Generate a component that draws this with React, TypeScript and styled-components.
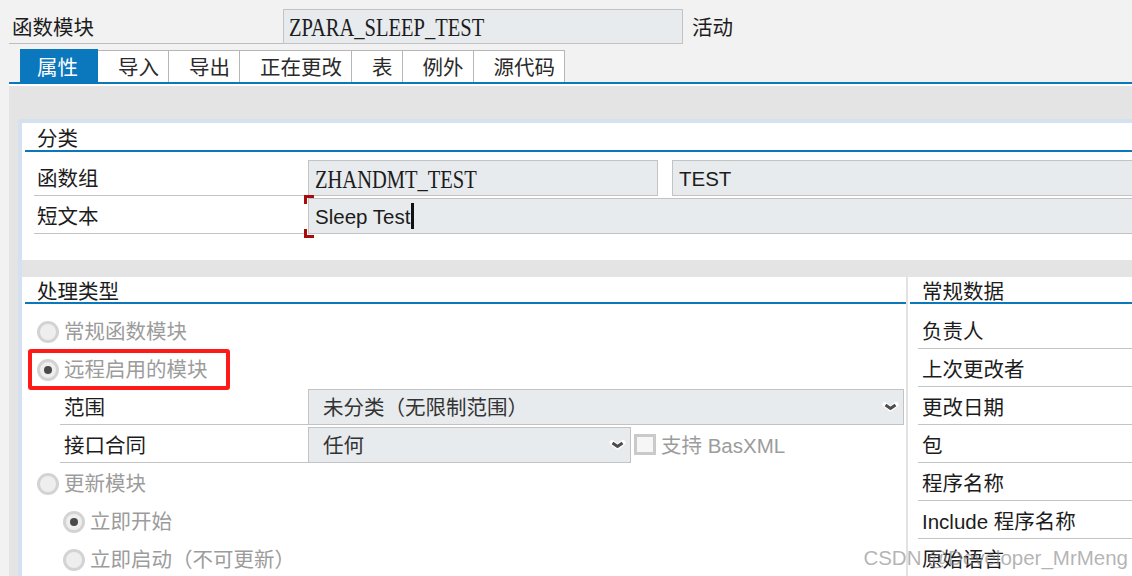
import React from 'react';
import styled, { createGlobalStyle } from 'styled-components';

const colors = {
  blue: '#0b78bd',
  page: '#f2f2f2',
  canvas: '#e4e4e4',
  frame: '#d5e1ee',
  field: '#e8ebee',
  fieldBorder: '#c3c3c3',
  rule: '#c4c4c4',
  tabBorder: '#b6b6b6',
  text: '#1c1c1c',
  muted: '#9c9c9c',
};

const GlobalStyle = createGlobalStyle`
  *, *::before, *::after { box-sizing: border-box; }
  html, body { margin: 0; padding: 0; background: ${colors.page}; }
  body {
    font-family: 'Liberation Sans', 'Noto Sans CJK SC', sans-serif;
    color: ${colors.text};
  }
`;

const Page = styled.div`
  position: relative;
  width: 1132px;
  height: 576px;
  overflow: hidden;
  background: ${colors.page};
  font-size: 20.5px;
  line-height: 1;
`;

const HeaderRow = styled.div`
  display: flex;
  align-items: stretch;
  height: 44px;
  padding: 9px 0 0 9px;
`;

const HeaderLabel = styled.div`
  width: 274px;
  padding: 4px 0 0 3px;
  display: flex;
  align-items: center;
  border-bottom: 1px solid #bdbdbd;
`;

const HeaderField = styled.div`
  width: 400px;
  padding: 2px 0 0 5px;
  display: flex;
  align-items: center;
  background: ${colors.field};
  border: 1px solid ${colors.fieldBorder};
`;

const Status = styled.div`
  padding: 3px 0 0 9px;
  display: flex;
  align-items: center;
`;

const TabBar = styled.div`
  display: flex;
  height: 34px;
  margin: 6px 0 0 9px;
  padding-left: 11px;
  border-bottom: 2px solid ${colors.blue};
`;

const Tab = styled.div<{ $active?: boolean }>`
  display: flex;
  align-items: center;
  padding: ${({ $active }) => ($active ? '4px 19px 0 17px' : '4px 9px 0 20px')};
  margin-top: ${({ $active }) => ($active ? '-1px' : '0')};
  height: ${({ $active }) => ($active ? '33px' : '32px')};
  background: ${({ $active }) => ($active ? colors.blue : '#fff')};
  color: ${({ $active }) => ($active ? '#fff' : '#2a2a2a')};
  border-top: 1px solid ${({ $active }) => ($active ? colors.blue : colors.tabBorder)};
  border-right: 1px solid ${({ $active }) => ($active ? colors.blue : colors.tabBorder)};
`;

const Canvas = styled.div`
  margin-left: 9px;
  border-top: 2px solid #fff;
  background: ${colors.canvas};
  padding: 33px 0 0 9px;
  height: 500px;
`;

const Frame = styled.div`
  display: flex;
  flex-direction: column;
  gap: 17px;
  margin-right: -60px;
  border-top: 4px solid ${colors.frame};
  border-left: 4px solid ${colors.frame};
  background: ${colors.canvas};
`;

const Panel = styled.div`
  background: #fff;
  padding-bottom: 26px;
`;

const SectionTitle = styled.div<{ $height: number; $inset?: number }>`
  height: ${({ $height }) => $height}px;
  margin-left: ${({ $inset = 3 }) => $inset}px;
  padding: 6px 0 0 12px;
  display: flex;
  align-items: center;
  border-bottom: 2px solid ${colors.blue};
`;

const Rows = styled.div<{ $top: number }>`
  padding-top: ${({ $top }) => $top}px;
`;

const FieldRow = styled.div<{ $indent: number }>`
  display: flex;
  align-items: flex-end;
  height: 38px;
  padding-left: ${({ $indent }) => $indent}px;
`;

const RowLabel = styled.div<{ $width?: number; $pad?: number }>`
  ${({ $width }) => ($width ? `width: ${$width}px;` : 'flex: 1;')}
  height: 38px;
  padding: 6px 0 0 ${({ $pad = 3 }) => $pad}px;
  display: flex;
  align-items: center;
  white-space: nowrap;
  border-bottom: 1px solid ${colors.rule};
`;

const Field = styled.div<{ $width?: number; $gap?: number }>`
  position: relative;
  ${({ $width }) => ($width ? `width: ${$width}px;` : 'flex: 1;')}
  margin-left: ${({ $gap = 3 }) => $gap}px;
  height: 36px;
  padding: 2px 0 0 6px;
  display: flex;
  align-items: center;
  background: ${colors.field};
  border: 1px solid ${colors.fieldBorder};
`;

const RequiredField = styled(Field)`
  &::before,
  &::after {
    content: '';
    position: absolute;
    left: -5px;
    width: 10px;
    height: 9px;
    border-left: 3px solid #a80d0d;
  }
  &::before {
    top: -4px;
    border-top: 3px solid #a80d0d;
  }
  &::after {
    bottom: -5px;
    border-bottom: 3px solid #a80d0d;
  }
`;

const KeyText = styled.span`
  display: inline-block;
  font-family: 'Liberation Serif', serif;
  font-size: 25px;
  transform: scaleX(0.82);
  transform-origin: left center;
  white-space: nowrap;
`;

const Caret = styled.span`
  display: inline-block;
  width: 3px;
  height: 26px;
  background: #111;
  margin: -2px 0 0 1px;
`;

const SplitPanel = styled.div`
  display: flex;
  background: #fff;
  height: 320px;
`;

const Column = styled.div<{ $width?: number }>`
  ${({ $width }) => ($width ? `width: ${$width}px;` : 'flex: 1;')}
`;

const Divider = styled.div`
  width: 2px;
  background: #e2e2e2;
`;

const RadioRow = styled.div<{ $indent: number }>`
  position: relative;
  height: 38px;
  display: flex;
  align-items: center;
  gap: 5px;
  padding: 4px 0 0 ${({ $indent }) => $indent}px;
  color: ${colors.muted};
`;

const Radio = styled.span<{ $checked?: boolean }>`
  position: relative;
  width: 22px;
  height: 22px;
  border-radius: 50%;
  border: 3px solid #d3d3d3;
  background: #eeeeee;

  &::after {
    content: '';
    display: ${({ $checked }) => ($checked ? 'block' : 'none')};
    position: absolute;
    left: 4px;
    top: 4px;
    width: 8px;
    height: 8px;
    border-radius: 50%;
    background: #4a4a4a;
  }
`;

const Highlight = styled.div`
  position: absolute;
  left: 6px;
  top: 0;
  width: 202px;
  height: 41px;
  border: 4px solid #ff1a1a;
  border-radius: 3px;
`;

const Select = styled.div<{ $width?: number }>`
  ${({ $width }) => ($width ? `width: ${$width}px;` : 'flex: 1; margin-right: 2px;')}
  height: 36px;
  padding: 3px 4px 0 14px;
  display: flex;
  align-items: center;
  justify-content: space-between;
  background: ${colors.field};
  border: 1px solid ${colors.fieldBorder};
  color: #333;

  svg {
    margin-top: -3px;
  }
`;

const Checkbox = styled.span`
  width: 22px;
  height: 21px;
  margin-left: 3px;
  margin-bottom: 8px;
  border: 3px solid #cacaca;
  background: #f6f6f6;
`;

const CheckLabel = styled.span`
  margin-left: 5px;
  height: 38px;
  padding-top: 4px;
  display: flex;
  align-items: center;
  color: ${colors.muted};
  white-space: nowrap;
`;

const Watermark = styled.div`
  position: absolute;
  right: 4px;
  bottom: 8px;
  font-size: 20.5px;
  color: rgba(130, 130, 130, 0.6);
  white-space: nowrap;
`;

const Chevron = () => (
  <svg width="17" height="12" viewBox="0 0 17 12">
    <path d="M3 3.5 L8.5 8 L14 3.5" fill="none" stroke="#fff" strokeWidth="5" strokeLinejoin="round" strokeLinecap="round" />
    <path d="M3.5 4 L8.5 7.5 L13.5 4" fill="none" stroke="#4c4c4c" strokeWidth="3" />
  </svg>
);

const tabs = ['属性', '导入', '导出', '正在更改', '表', '例外', '源代码'];
const generalData = ['负责人', '上次更改者', '更改日期', '包', '程序名称', 'Include 程序名称', '原始语言'];

export default function App() {
  return (
    <Page>
      <GlobalStyle />
      <HeaderRow>
        <HeaderLabel>函数模块</HeaderLabel>
        <HeaderField>
          <KeyText>ZPARA_SLEEP_TEST</KeyText>
        </HeaderField>
        <Status>活动</Status>
      </HeaderRow>

      <TabBar>
        {tabs.map((tab, i) => (
          <Tab key={tab} $active={i === 0}>
            {tab}
          </Tab>
        ))}
      </TabBar>

      <Canvas>
        <Frame>
          <Panel>
            <SectionTitle $height={29}>分类</SectionTitle>
            <Rows $top={6}>
              <FieldRow $indent={12}>
                <RowLabel $width={271}>函数组</RowLabel>
                <Field $width={350}>
                  <KeyText>ZHANDMT_TEST</KeyText>
                </Field>
                <Field $gap={14}>TEST</Field>
              </FieldRow>
              <FieldRow $indent={12}>
                <RowLabel $width={271}>短文本</RowLabel>
                <RequiredField>
                  Sleep Test
                  <Caret />
                </RequiredField>
              </FieldRow>
            </Rows>
          </Panel>

          <SplitPanel>
            <Column $width={884}>
              <SectionTitle $height={27}>处理类型</SectionTitle>
              <Rows $top={7}>
                <RadioRow $indent={15}>
                  <Radio />
                  常规函数模块
                </RadioRow>
                <RadioRow $indent={15}>
                  <Radio $checked />
                  远程启用的模块
                  <Highlight />
                </RadioRow>
                <FieldRow $indent={38}>
                  <RowLabel $width={248} $pad={4}>范围</RowLabel>
                  <Select>
                    未分类（无限制范围）
                    <Chevron />
                  </Select>
                </FieldRow>
                <FieldRow $indent={38}>
                  <RowLabel $width={248} $pad={4}>接口合同</RowLabel>
                  <Select $width={323}>
                    任何
                    <Chevron />
                  </Select>
                  <Checkbox />
                  <CheckLabel>支持 BasXML</CheckLabel>
                </FieldRow>
                <RadioRow $indent={15}>
                  <Radio />
                  更新模块
                </RadioRow>
                <RadioRow $indent={41}>
                  <Radio $checked />
                  立即开始
                </RadioRow>
                <RadioRow $indent={41}>
                  <Radio />
                  立即启动（不可更新）
                </RadioRow>
              </Rows>
            </Column>
            <Divider />
            <Column>
              <SectionTitle $height={27} $inset={2}>常规数据</SectionTitle>
              <Rows $top={7}>
                {generalData.map((label) => (
                  <FieldRow key={label} $indent={10}>
                    <RowLabel $pad={4}>{label}</RowLabel>
                  </FieldRow>
                ))}
              </Rows>
            </Column>
          </SplitPanel>
        </Frame>
      </Canvas>

      <Watermark>CSDN @Developer_MrMeng</Watermark>
    </Page>
  );
}
